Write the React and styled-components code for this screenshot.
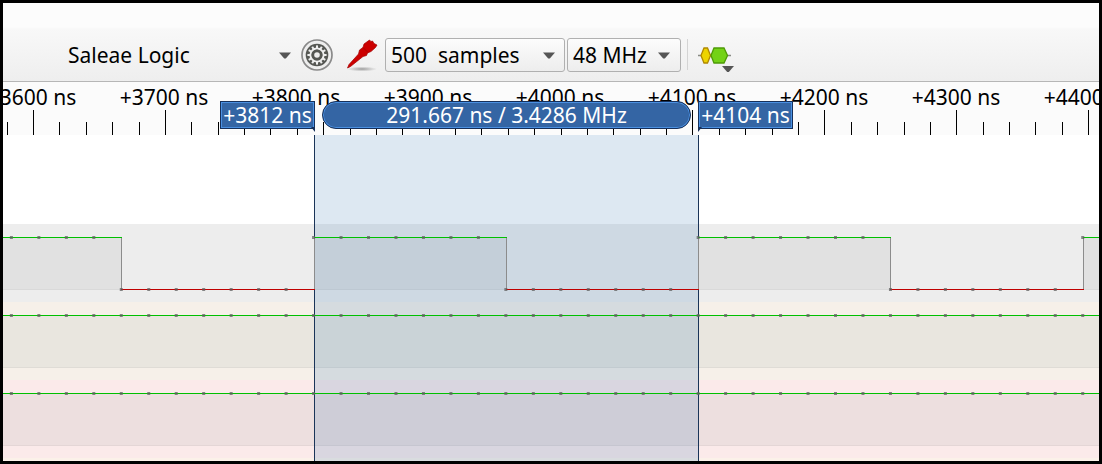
import React from 'react';
import styled, { createGlobalStyle } from 'styled-components';

const GlobalStyle = createGlobalStyle`
  *, *::before, *::after { box-sizing: border-box; }
  body { margin: 0; background: #000; }
`;

const FONT = '"Noto Sans", "Open Sans", sans-serif';
const SAMPLE_START = 8.4;
const SAMPLE_STEP = 27.47;
const SAMPLE_COUNT = 120;
const TICK_START = 3.6;
const TICK_STEP = 26.38;

const Window = styled.main`
  display: flex;
  flex-direction: column;
  border: 3px solid #000;
  background: #fff;
  color: #000;
  font-family: ${FONT};
  font-size: 21px;
  line-height: 28px;
  overflow: hidden;
`;

const Toolbar = styled.header`
  display: flex;
  align-items: center;
  height: 79px;
  padding-top: 25px;
  padding-left: 64px;
  border-bottom: 1px solid #b6b6b6;
  background: linear-gradient(#fcfcfc 0 24px, #f8f8f8 26px, #eeeeee 100%);
`;

const SelectWrap = styled.label`
  position: relative;
  display: flex;
  width: ${(p) => p.$width}px;
  margin-right: ${(p) => p.$gap}px;
`;

const Select = styled.select`
  appearance: none;
  width: 100%;
  height: 34px;
  margin: 0;
  padding: 0 ${(p) => (p.$plain ? 0 : 5)}px;
  border: 1px solid ${(p) => (p.$plain ? 'transparent' : '#b0b0b0')};
  border-radius: 3px;
  background: ${(p) => (p.$plain ? 'transparent' : 'linear-gradient(#fcfcfc, #ededed)')};
  color: #000;
  font: inherit;
  line-height: 28px;
`;

const Arrow = styled.svg`
  position: absolute;
  right: ${(p) => p.$right}px;
  top: 14px;
  width: 12px;
  height: 7px;
  fill: #555;
  pointer-events: none;
`;

const IconButton = styled.button`
  display: flex;
  margin: 0 ${(p) => p.$gap}px 0 0;
  padding: 0;
  border: 0;
  background: none;
`;

const Divider = styled.span`
  width: 1px;
  height: 31px;
  margin: 0 10px 0 6px;
  background: #d4d4d4;
`;

const View = styled.section`
  position: relative;
`;

const Ruler = styled.div`
  height: 53px;
  padding-top: 1px;
  background: #fbfbfb;
  overflow: hidden;
`;

const Labels = styled.div`
  display: flex;
  height: 27px;
  margin-left: -37px;
`;

const Label = styled.span`
  flex: 0 0 132px;
  text-align: center;
  white-space: pre;
`;

const Ticks = styled.svg`
  display: block;
  width: 100%;
  height: 25px;
`;

const Gap = styled.div`
  height: 89px;
`;

const Lane = styled.div`
  height: 78px;
  background: ${(p) => p.$bg};
`;

const Wave = styled.svg`
  position: relative;
  z-index: ${(p) => p.$z};
  display: block;
  width: 100%;
  height: 78px;
  margin-bottom: ${(p) => p.$pull ? -78 : 0}px;
`;

const Foot = styled.div`
  height: 3px;
  background: #fbf1e9;
`;

const Selection = styled.div`
  position: absolute;
  z-index: 1;
  top: 53px;
  bottom: 0;
  left: 311px;
  width: 385px;
  border: solid #1a3458;
  border-width: 0 1px;
  background: rgba(52, 117, 176, 0.17);
`;

const Marker = styled.div`
  position: absolute;
  z-index: 3;
  top: 19px;
  left: ${(p) => p.$left}px;
  width: ${(p) => p.$width}px;
  height: 28px;
  border: 1px solid #16305a;
  border-radius: ${(p) => (p.$round ? 14 : 0)}px;
  box-shadow: inset 0 0 0 1px #4a90e2;
  background: #3465a4;
  color: #fff;
  line-height: 27px;
  text-align: center;
  white-space: pre;
`;

const Pointer = styled.svg`
  position: absolute;
  top: 25px;
  ${(p) => p.$side}: -1px;
  width: 4px;
  height: 5px;
`;

const LANES = [
  { bg: '#ededed', fill: '#e1e1e1', base: '#d9d9d9', clock: true },
  { bg: '#f6f0e9', fill: '#e9e6df', base: '#dfdcd6' },
  { bg: '#fbeaea', fill: '#eddfdf', base: '#e4d6d6' },
];

const samples = Array.from({ length: SAMPLE_COUNT }, (_, i) => SAMPLE_START + i * SAMPLE_STEP);
const isHigh = (i, clock) => !clock || Math.floor((i + 3) / 7) % 2 === 0;

function runsOf(clock) {
  if (!clock) return [{ from: 0, to: samples[SAMPLE_COUNT - 1], high: true }];
  const runs = [];
  let from = 0;
  let high = true;
  for (let i = 4; i < SAMPLE_COUNT; i += 7) {
    const to = Math.round(samples[i]);
    runs.push({ from, to, high });
    from = to;
    high = !high;
  }
  return runs;
}

function Signal({ lane }) {
  const runs = runsOf(lane.clock);
  return (
    <Lane $bg={lane.bg}>
      <Wave $z={0} $pull aria-hidden="true">
        {runs.filter((r) => r.high).map((r) => (
          <rect key={r.from} x={r.from} y="13" width={r.to - r.from} height="53" fill={lane.fill} />
        ))}
        <rect x="0" y="65" width="100%" height="1" fill={lane.base} />
      </Wave>
      <Wave $z={2} aria-hidden="true">
        {runs.map((r) => (
          <g key={r.from}>
            <rect x={r.from} y={r.high ? 13 : 65} width={r.to - r.from + 1} height="1" fill={r.high ? '#00c000' : '#c00000'} />
            {lane.clock && <rect x={r.to} y="14" width="1" height="51" fill="#8c8c8c" />}
          </g>
        ))}
        {samples.map((x, i) => (
          <rect key={x} x={x - 1.5} y={isHigh(i, lane.clock) ? 12 : 64} width="3" height="3" fill="#606060" fillOpacity="0.75" />
        ))}
      </Wave>
    </Lane>
  );
}

const TriangleDown = ({ right }) => (
  <Arrow $right={right} viewBox="0 0 12 7" aria-hidden="true"><path d="M0 .5h12L6.800 6.500H5.200Z" /></Arrow>
);

function Picker({ name, value, width, gap, right, plain }) {
  return (
    <SelectWrap $width={width} $gap={gap}>
      <Select $plain={plain} aria-label={name}><option>{value}</option></Select>
      <TriangleDown right={right} />
    </SelectWrap>
  );
}

const teeth = Array.from({ length: 12 }, (_, i) => i * 30);

const GearIcon = () => (
  <svg width="32" height="32" viewBox="0 0 32 32" aria-hidden="true">
    <circle cx="16" cy="16" r="15" fill="#eee" stroke="#8a8a8a" strokeWidth="1.700" />
    <circle cx="16" cy="16" r="11.300" fill="#555753" />
    <circle cx="16" cy="16" r="6.500" fill="none" stroke="#eee" strokeWidth="2.200" />
    {teeth.map((a) => <rect key={a} x="15" y="6.400" width="2" height="3" fill="#eee" transform={`rotate(${a} 16 16)`} />)}
    <circle cx="16" cy="16" r="5.600" fill="#555753" />
    <circle cx="16" cy="16" r="2.800" fill="#eee" />
  </svg>
);

const ProbeIcon = () => (
  <svg width="32" height="34" viewBox="0 0 32 34" aria-hidden="true">
    <defs>
      <radialGradient id="shade"><stop offset="0" stopColor="#777" stopOpacity=".7" /><stop offset="1" stopColor="#888" stopOpacity="0" /></radialGradient>
    </defs>
    <ellipse cx="16" cy="31" rx="15" ry="2.500" fill="url(#shade)" />
    <path d="M1.500 30 3 26.500 12.500 16 13.500 12 17 9.500 18 6 23.500 2 25 3.500 26.500 3 28 5.500 31 7 29.500 9.500 25 13.500 21.500 15 20.500 17.500 17 18.500 4.500 28.500Z" fill="#c00" stroke="#a40000" strokeWidth=".7" />
    <path d="M17 9.500 22 14.500" stroke="#a40000" strokeWidth=".8" />
  </svg>
);

const DecoderIcon = () => (
  <svg width="38" height="34" viewBox="0 0 38 34" aria-hidden="true">
    <path d="M0 17.500H33" stroke="#888a85" strokeWidth="1.300" />
    <path d="M3 17.500 6 10H9.500l3 7.500L9.500 25H6Z" fill="#edd400" stroke="#b08800" strokeWidth="1.300" />
    <path d="M13 17.500 16 10h10l3.500 7.500L26 25H16Z" fill="#73d216" stroke="#4e9a06" strokeWidth="1.300" />
    <path d="M24 28h12l-5.200 6h-1.600Z" fill="#555" />
  </svg>
);

const majors = [3600, 3700, 3800, 3900, 4000, 4100, 4200, 4300, 4400];

export default function App() {
  return (
    <>
      <GlobalStyle />
      <Window>
        <Toolbar>
          <Picker name="Device" value="Saleae Logic" width={224} gap={10} right={0} plain />
          <IconButton $gap={13} aria-label="Configure device"><GearIcon /></IconButton>
          <IconButton $gap={7} aria-label="Configure channels"><ProbeIcon /></IconButton>
          <Picker name="Sample count" value={'500\u00a0 samples'} width={180} gap={2} right={10} />
          <Picker name="Sample rate" value="48 MHz" width={114} gap={0} right={11} />
          <Divider />
          <IconButton $gap={0} aria-label="Add protocol decoder"><DecoderIcon /></IconButton>
        </Toolbar>
        <View>
          <Ruler>
            <Labels>{majors.map((t) => <Label key={t}>{`+${t} ns`}</Label>)}</Labels>
            <Ticks aria-hidden="true">
              {Array.from({ length: 120 }, (_, i) => {
                const major = i % 5 === 1;
                return <rect key={i} x={Math.round(TICK_START + i * TICK_STEP)} y={major ? 0 : 12} width="1" height={major ? 25 : 13} />;
              })}
            </Ticks>
          </Ruler>
          <Gap />
          {LANES.map((lane) => <Signal key={lane.bg} lane={lane} />)}
          <Foot />
          <Selection />
          <Marker $left={217} $width={95}>
            +3812 ns
            <Pointer $side="right" viewBox="0 0 4 5"><path d="M0 0H4V5Z" fill="#16305a" /></Pointer>
          </Marker>
          <Marker $left={319} $width={369} $round>291.667 ns / 3.4286 MHz</Marker>
          <Marker $left={695} $width={95}>
            +4104 ns
            <Pointer $side="left" viewBox="0 0 4 5"><path d="M0 0H4L0 5Z" fill="#16305a" /></Pointer>
          </Marker>
        </View>
      </Window>
    </>
  );
}
